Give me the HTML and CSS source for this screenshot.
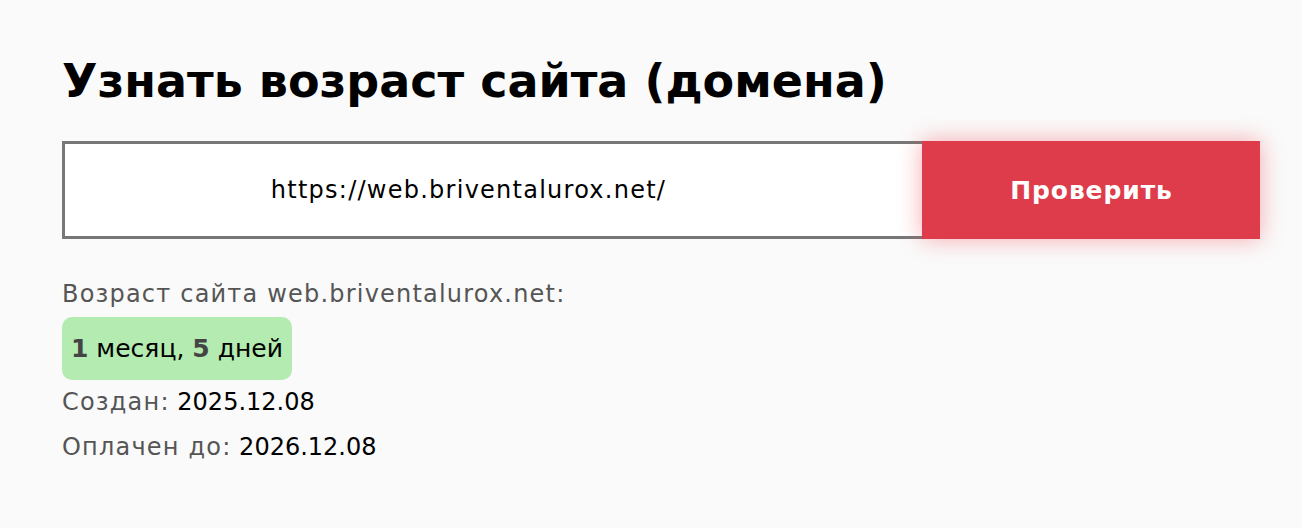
FILE: index.html
```html
<!DOCTYPE html>
<html lang="ru">
<head>
<meta charset="utf-8">
<title>Узнать возраст сайта (домена)</title>
<link rel="stylesheet" href="styles.css">
</head>
<body>
<main class="page">
  <h1 class="title">Узнать возраст сайта (домена)</h1>
  <form class="check">
    <div class="field">https://web.briventalurox.net/</div>
    <button type="button" class="btn">Проверить</button>
  </form>
  <div class="result">
    <div class="line muted wide">Возраст сайта web.briventalurox.net:</div>
    <div class="badge"><b>1</b> месяц, <b>5</b> дней</div>
    <div class="line"><span class="muted wide">Создан:</span> <span class="val">2025.12.08</span></div>
    <div class="line"><span class="muted wide">Оплачен до:</span> <span class="val">2026.12.08</span></div>
  </div>
</main>
</body>
</html>
```
FILE: styles.css
```css
html, body {
  margin: 0;
  padding: 0;
  background: #fafafa;
  font-family: "DejaVu Sans", sans-serif;
}
.page {
  padding: 50px 42px 0 62px;
}
.title {
  margin: 0;
  font-size: 46px;
  font-weight: 700;
  line-height: 62px;
  color: #000;
}
.check {
  display: flex;
  margin-top: 29px;
  width: 1198px;
  height: 98px;
}
.field {
  flex: 1;
  box-sizing: border-box;
  border: 3px solid #777;
  border-right: none;
  background: #fff;
  display: flex;
  align-items: center;
  justify-content: center;
  padding-right: 50px;
  font-size: 24px;
  letter-spacing: 1.25px;
  color: #000;
}
.btn {
  width: 338px;
  border: none;
  background: #df3c4b;
  color: #fff;
  font-family: inherit;
  font-size: 25px;
  font-weight: 700;
  letter-spacing: 0.9px;
  padding: 0 0 0 1px;
  box-shadow: 0 0 22px rgba(240, 70, 80, 0.45);
}
.result {
  margin-top: 33px;
  font-size: 24px;
}
.line {
  line-height: 45px;
  height: 45px;
}
.muted {
  color: #555;
}
.wide {
  letter-spacing: 1.2px;
}
.val {
  color: #000;
}
.badge {
  display: inline-block;
  padding: 0 9px;
  height: 63px;
  line-height: 63px;
  border-radius: 10px;
  background: #b4ebb0;
  font-size: 25px;
  color: #000;
}
.badge b {
  color: #444;
}
```
